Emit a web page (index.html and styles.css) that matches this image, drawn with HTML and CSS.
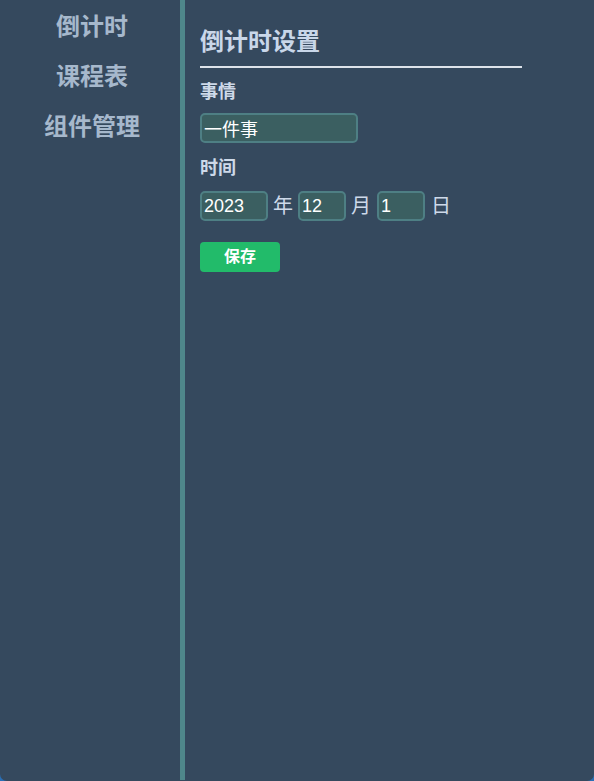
FILE: index.html
```html
<!DOCTYPE html>
<html lang="zh">
<head>
<meta charset="utf-8">
<title>倒计时设置</title>
<link rel="stylesheet" href="styles.css">
</head>
<body>
<div class="app">
  <nav class="sidebar">
    <div class="nav-item">倒计时</div>
    <div class="nav-item">课程表</div>
    <div class="nav-item">组件管理</div>
  </nav>
  <main class="main">
    <h2 class="title">倒计时设置</h2>
    <div class="label">事情</div>
    <input class="field field-text" type="text" value="一件事">
    <div class="label label-time">时间</div>
    <div class="date-row">
      <input class="field field-year" type="text" value="2023">
      <span class="unit">年</span>
      <input class="field field-small" type="text" value="12">
      <span class="unit">月</span>
      <input class="field field-small field-day" type="text" value="1">
      <span class="unit unit-last">日</span>
    </div>
    <button class="save">保存</button>
  </main>
</div>
</body>
</html>
```
FILE: styles.css
```css
html {
  background: #2a6fb6;
  height: 100%;
}
body {
  margin: 0;
  height: 781px;
  background: #35495e;
  border-radius: 0 0 7px 7px;
  overflow: hidden;
  font-family: "Liberation Sans", "Noto Sans CJK SC", sans-serif;
}
.app {
  display: flex;
  height: 780px;
}
.sidebar {
  width: 180px;
  flex: none;
  border-right: 5px solid #4f878b;
  padding-top: 2px;
  box-sizing: content-box;
}
.nav-item {
  height: 50px;
  line-height: 50px;
  text-align: center;
  font-size: 24px;
  font-weight: bold;
  color: #a6b8cc;
  padding-left: 4px;
}
.main {
  padding-left: 15px;
  display: flex;
  flex-direction: column;
  align-items: flex-start;
}
.title {
  margin: 0;
  padding-top: 26px;
  padding-bottom: 8px;
  width: 322px;
  font-size: 24px;
  line-height: 32px;
  font-weight: bold;
  color: #c9d7e9;
  border-bottom: 2px solid #dde3ea;
}
.label {
  margin-top: 12px;
  font-size: 18px;
  line-height: 24px;
  font-weight: bold;
  color: #cdd9e9;
}
.label-time {
  margin-top: 13px;
}
.field {
  box-sizing: border-box;
  height: 30px;
  border: 2px solid #4e7f84;
  border-radius: 5px;
  background: #3b5f61;
  color: #ffffff;
  font-family: "Liberation Sans", "Noto Sans CJK SC", sans-serif;
  font-size: 18px;
  padding: 0 2px;
  outline: none;
}
.field-text {
  margin-top: 9px;
  width: 158px;
}
.date-row {
  margin-top: 11px;
  display: flex;
  align-items: center;
  gap: 5px;
}
.field-year {
  width: 68px;
}
.field-small {
  width: 48px;
}
.field-day {
  margin-left: 1px;
}
.unit {
  font-size: 20px;
  color: #cdd9e9;
  line-height: 30px;
  width: 20px;
}
.unit-last {
  margin-left: 1px;
}
.save {
  margin-top: 21px;
  width: 80px;
  height: 30px;
  border: none;
  border-radius: 4px;
  background: #22bb6a;
  color: #ffffff;
  font-family: "Noto Sans CJK SC", sans-serif;
  font-size: 16px;
  line-height: 26px;
  font-weight: bold;
  padding: 0 0 4px;
}
```
